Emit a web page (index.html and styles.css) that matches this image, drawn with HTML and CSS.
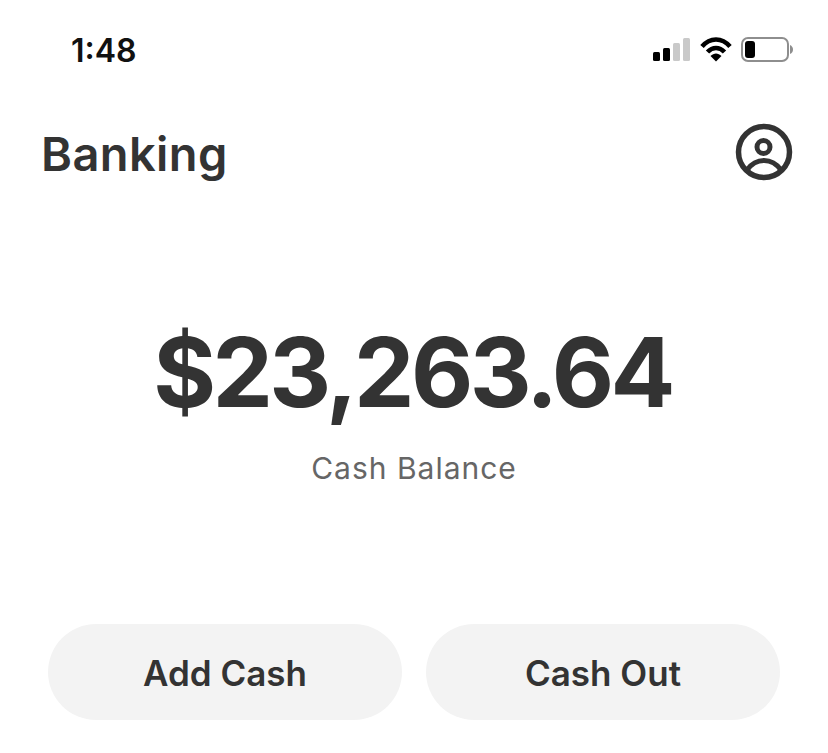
FILE: index.html
```html
<!DOCTYPE html>
<html lang="en">
<head>
  <meta charset="UTF-8">
  <meta name="viewport" content="width=device-width, initial-scale=1.0">
  <title>Banking</title>
  <link rel="stylesheet" href="styles.css">
</head>
<body>

<!-- Status bar -->
<div class="status-bar">
  <span class="time">1:48</span>
  <div class="status-icons">
    <svg class="signal" width="38" height="24" viewBox="0 0 38 24">
      <rect x="0" y="14" width="7" height="9" rx="1.5" fill="#000"/>
      <rect x="10" y="10" width="7" height="13" rx="1.5" fill="#000"/>
      <rect x="20" y="5" width="7" height="18" rx="1.5" fill="#c9c9c9"/>
      <rect x="30" y="0" width="7" height="23" rx="1.5" fill="#c9c9c9"/>
    </svg>
    <svg class="wifi" width="32" height="26" viewBox="0 0 32 26">
      <path d="M2 9.5C10 0 22 0 30 9.5" fill="none" stroke="#000" stroke-width="4.5"/>
      <path d="M7.5 15C12.5 9.5 19.5 9.5 24.5 15" fill="none" stroke="#000" stroke-width="4.5"/>
      <path d="M10.5 19C14 15.5 18 15.5 21.5 19L16 24.5Z" fill="#000"/>
    </svg>
    <svg class="battery" width="52" height="26" viewBox="0 0 52 26">
      <rect x="1" y="1" width="46" height="23" rx="6" fill="none" stroke="#8e8e8e" stroke-width="2"/>
      <rect x="4" y="4" width="10" height="17" rx="3" fill="#000"/>
      <path d="M49 8C51 9 52 10.5 52 12.5C52 14.5 51 16 49 17Z" fill="#8e8e8e"/>
    </svg>
  </div>
</div>

<header class="top-bar">
  <h1>Banking</h1>
  <svg class="profile" width="58" height="58" viewBox="0 0 58 58">
    <circle cx="29" cy="29" r="25.5" fill="none" stroke="#333" stroke-width="5.5"/>
    <circle cx="28.5" cy="24" r="6.5" fill="none" stroke="#333" stroke-width="5"/>
    <path d="M12 47C17 40 23 37.5 29 37.5C35 37.5 41 40 46 47" fill="none" stroke="#333" stroke-width="5"/>
  </svg>
</header>

<main class="balance">
  <div class="amount">$23,263.64</div>
  <div class="label">Cash Balance</div>
</main>

<div class="actions">
  <button type="button">Add Cash</button>
  <button type="button">Cash Out</button>
</div>

</body>
</html>
```

FILE: styles.css
```css
/* General Styles */
* {
  margin: 0;
  padding: 0;
  box-sizing: border-box;
}

body {
  width: 828px;
  height: 753px;
  overflow: hidden;
  background-color: #fff;
  color: #333;
  font-family: Inter, "Liberation Sans", sans-serif;
}

.status-bar {
  display: flex;
  justify-content: space-between;
  align-items: center;
  height: 40px;
  margin-top: 30px;
  padding: 0 35px 0 71px;
}

.time {
  font-size: 32px;
  font-weight: 600;
  color: #111;
}

.status-icons {
  display: flex;
  align-items: center;
  gap: 9px;
}

.top-bar {
  display: flex;
  justify-content: space-between;
  align-items: center;
  height: 60px;
  margin-top: 52px;
  padding: 0 35px 0 41px;
}

h1 {
  font-size: 47px;
  font-weight: 600;
  line-height: 64px;
  letter-spacing: 0.4px;
  padding-top: 4px;
}

.balance {
  text-align: center;
  margin-top: 132px;
  padding-right: 3px;
}

.amount {
  font-size: 96px;
  font-weight: 700;
  line-height: 116px;
  letter-spacing: -3.6px;
}

.label {
  margin-top: 19px;
  margin-right: -3px;
  font-size: 30px;
  line-height: 38px;
  color: #666;
  letter-spacing: 1px;
}

.actions {
  display: flex;
  gap: 24px;
  margin-top: 137px;
  padding: 0 48px;
}

button {
  flex: 1;
  height: 96px;
  padding-top: 2px;
  border: none;
  border-radius: 48px;
  background-color: #f3f3f3;
  color: #333;
  font-family: inherit;
  font-size: 35px;
  font-weight: 600;
}
```
